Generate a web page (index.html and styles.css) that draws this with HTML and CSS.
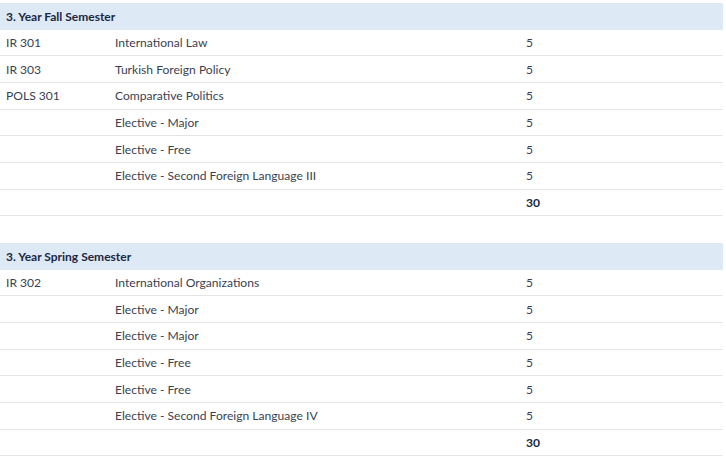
FILE: index.html
```html
<!DOCTYPE html>
<html>
<head>
<meta charset="utf-8">
<link rel="stylesheet" href="styles.css">
</head>
<body>
<div class="curriculum">
  <section class="semester">
    <div class="row head"><span class="c1">3. Year Fall Semester</span></div>
    <div class="row"><span class="c1">IR 301</span><span class="c2">International Law</span><span class="c3">5</span></div>
    <div class="row"><span class="c1">IR 303</span><span class="c2">Turkish Foreign Policy</span><span class="c3">5</span></div>
    <div class="row"><span class="c1">POLS 301</span><span class="c2">Comparative Politics</span><span class="c3">5</span></div>
    <div class="row"><span class="c1"></span><span class="c2">Elective - Major</span><span class="c3">5</span></div>
    <div class="row"><span class="c1"></span><span class="c2">Elective - Free</span><span class="c3">5</span></div>
    <div class="row"><span class="c1"></span><span class="c2">Elective - Second Foreign Language III</span><span class="c3">5</span></div>
    <div class="row total"><span class="c1"></span><span class="c2"></span><span class="c3">30</span></div>
  </section>
  <section class="semester">
    <div class="row head"><span class="c1">3. Year Spring Semester</span></div>
    <div class="row"><span class="c1">IR 302</span><span class="c2">International Organizations</span><span class="c3">5</span></div>
    <div class="row"><span class="c1"></span><span class="c2">Elective - Major</span><span class="c3">5</span></div>
    <div class="row"><span class="c1"></span><span class="c2">Elective - Major</span><span class="c3">5</span></div>
    <div class="row"><span class="c1"></span><span class="c2">Elective - Free</span><span class="c3">5</span></div>
    <div class="row"><span class="c1"></span><span class="c2">Elective - Free</span><span class="c3">5</span></div>
    <div class="row"><span class="c1"></span><span class="c2">Elective - Second Foreign Language IV</span><span class="c3">5</span></div>
    <div class="row total"><span class="c1"></span><span class="c2"></span><span class="c3">30</span></div>
  </section>
</div>
</body>
</html>
```
FILE: styles.css
```css
html, body {
  margin: 0;
  background: #ffffff;
}
body {
  font-family: Lato, "Noto Sans", sans-serif;
  font-size: 12.1px;
  color: #3b3f50;
}
.curriculum {
  width: 723px;
  padding-top: 3px;
  display: flex;
  flex-direction: column;
  gap: 26.67px;
}
.row {
  display: grid;
  grid-template-columns: 109px 411px 1fr;
  align-items: center;
  height: 26.67px;
  box-sizing: border-box;
  border-bottom: 1px solid #e4e4e4;
}
.row span {
  padding-left: 6px;
  white-space: nowrap;
}
.row.head {
  background: #dde9f5;
  border-bottom: none;
  grid-template-columns: 1fr;
  font-weight: bold;
  font-size: 12px;
  color: #1c2744;
}
.total .c3 {
  font-weight: bold;
  color: #1c2744;
}
```
